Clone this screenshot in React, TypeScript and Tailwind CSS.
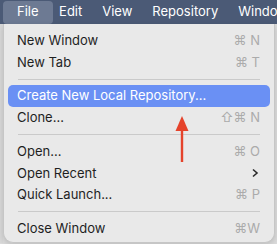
const font = { fontFamily: 'Inter, "Liberation Sans", sans-serif' };

const topMenus = ["File", "Edit", "View", "Repository", "Windo"];

type Item =
  | { kind: "item"; label: string; shortcut?: string; active?: boolean; submenu?: boolean }
  | { kind: "sep" };

const items: Item[] = [
  { kind: "item", label: "New Window", shortcut: "⌘ N" },
  { kind: "item", label: "New Tab", shortcut: "⌘ T" },
  { kind: "sep" },
  { kind: "item", label: "Create New Local Repository...", active: true },
  { kind: "item", label: "Clone...", shortcut: "⇧⌘ N" },
  { kind: "sep" },
  { kind: "item", label: "Open...", shortcut: "⌘ O" },
  { kind: "item", label: "Open Recent", submenu: true },
  { kind: "item", label: "Quick Launch...", shortcut: "⌘ P" },
  { kind: "sep" },
  { kind: "item", label: "Close Window", shortcut: "⌘W" },
];

function MenuRow({ item }: { item: Item }) {
  if (item.kind === "sep") {
    return <div className="mx-[10px] my-[5.5px] h-px bg-[#cacaca]" />;
  }
  return (
    <div
      className={`flex h-[21.7px] items-center justify-between rounded-[5px] pl-[9px] pr-[10px] text-[13px] ${
        item.active ? "bg-[#6a90f4] text-white" : "text-[#1f1f1f]"
      }`}
    >
      <span>{item.label}</span>
      {item.shortcut ? (
        <span className="text-[13px] text-[#ababab]">{item.shortcut}</span>
      ) : item.submenu ? (
        <svg width="8" height="10" viewBox="0 0 8 10" className="mr-[1px]">
          <path d="M2 1.5 L6 5 L2 8.5" fill="none" stroke="#2a2a2a" strokeWidth="1.6" />
        </svg>
      ) : null}
    </div>
  );
}

export default function App() {
  return (
    <div className="relative h-[244px] w-[277px] overflow-hidden bg-[#dcdcdc]" style={font}>
      <div className="flex h-[24px] items-center whitespace-nowrap bg-[#4b5a76] pl-[3px] text-[13px] font-normal text-white">
        {topMenus.map((m, i) => (
          <div
            key={m}
            className={`flex h-[23px] shrink-0 items-center rounded-[4px] ${
              i === 0 ? "bg-[#6d7a93] px-[14px]" : "px-[10px]"
            } ${i === 1 ? "ml-[-3.5px]" : ""}`}
          >
            {m}
          </div>
        ))}
      </div>

      <div className="flex">
        <div className="w-[3px] bg-[#d8d8d8]" />
        <div className="h-[219px] w-[272px] rounded-b-[10px] border border-t-0 border-[#c6c6c6] bg-[#e9e9e9] px-[4px] pt-[6px] shadow-[0_2px_6px_rgba(0,0,0,0.15)]">
          {items.map((it, i) => (
            <MenuRow key={i} item={it} />
          ))}
        </div>
      </div>

      <svg className="absolute left-[175px] top-[116px]" width="14" height="48" viewBox="0 0 14 48">
        <polygon points="7,0 13.5,15 0.5,15" fill="#e5432b" />
        <rect x="5.8" y="14" width="2.4" height="32" fill="#e5432b" />
      </svg>
    </div>
  );
}
